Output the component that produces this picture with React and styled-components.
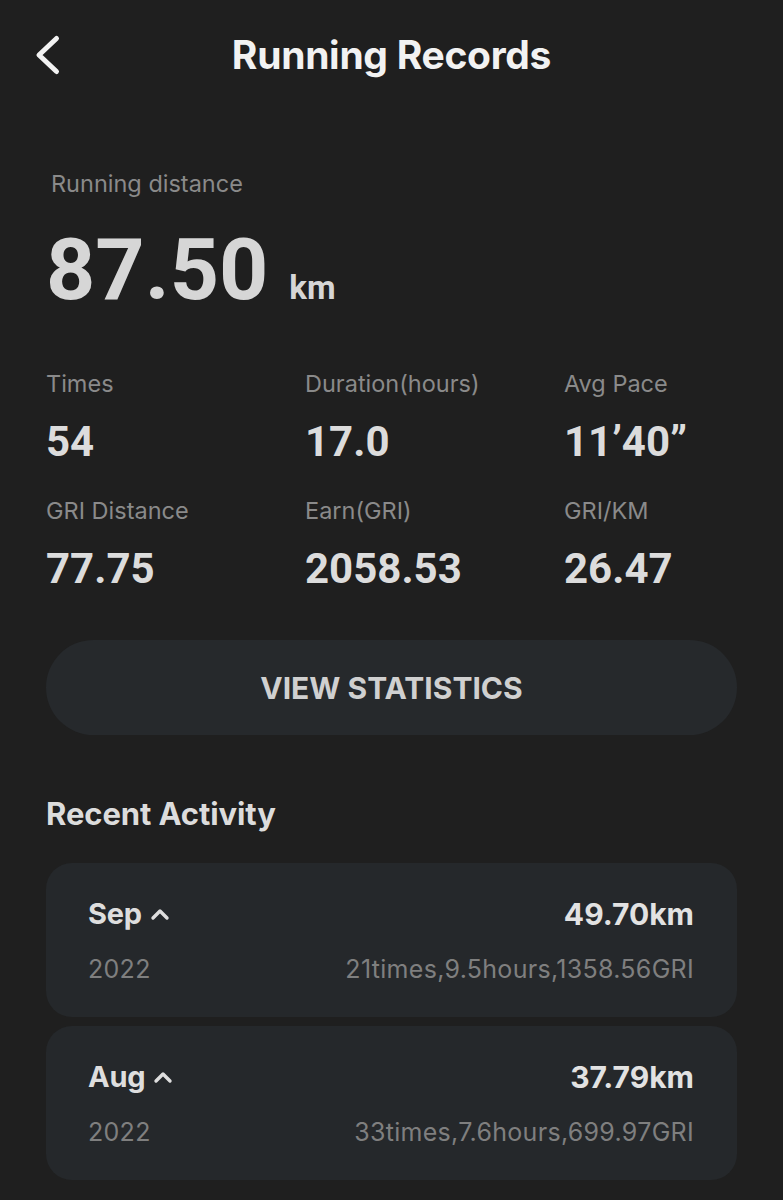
import React from 'react'
import styled, { createGlobalStyle } from 'styled-components'

const GlobalStyle = createGlobalStyle`
    body {
        margin: 0;
        background-color: #1f1f1f;
        font-family: Inter, Roboto, "Liberation Sans", sans-serif;
    }
`
const Page = styled.div`
    width: 783px;
    min-height: 1200px;
    background-color: #1f1f1f;
    color: #d6d6d6;
    padding: 0 46px;
    box-sizing: border-box;
`
const Header = styled.div`
    height: 108px;
    display: flex;
    align-items: center;
    justify-content: center;
    position: relative;
`
const Back = styled.button`
    position: absolute;
    left: -13px;
    top: 33px;
    background: none;
    border: none;
    padding: 0;
    width: 28px;
    height: 44px;
    display: block;
`
const Title = styled.h1`
    margin: 0;
    font-size: 39px;
    line-height: 1;
    font-weight: 700;
    color: #f2f2f2;
    letter-spacing: -0.3px;
`
const Summary = styled.div`
    padding-top: 61px;
    padding-left: 5px;
`
const Label = styled.div`
    font-size: 23.5px;
    line-height: 30px;
    color: #8a8a8a;
`
const Big = styled.div`
    display: flex;
    align-items: baseline;
    margin-top: 28px;
    margin-left: -5px;
`
const BigNumber = styled.span`
    font-family: Roboto, "Liberation Sans", sans-serif;
    font-size: 86px;
    font-weight: 700;
    line-height: 86px;
    color: #d6d6d6;
`
const Unit = styled.span`
    font-family: Roboto, "Liberation Sans", sans-serif;
    font-size: 33px;
    line-height: 34px;
    font-weight: 700;
    margin-left: 21px;
    color: #d6d6d6;
`
const Grid = styled.div`
    display: grid;
    grid-template-columns: 259px 259px 1fr;
    row-gap: 31px;
    margin-top: 56px;
`
const Stat = styled.div`
    display: flex;
    flex-direction: column;
    gap: 20px;
`
const StatValue = styled.div`
    font-family: Roboto, "Liberation Sans", sans-serif;
    font-size: 42px;
    font-weight: 700;
    line-height: 46px;
    color: #dcdcdc;
`
const StatButton = styled.button`
    margin-top: 48px;
    width: 100%;
    height: 95px;
    border: none;
    border-radius: 48px;
    background-color: #26292c;
    color: #d0d0d0;
    font-family: Inter, Roboto, "Liberation Sans", sans-serif;
    font-size: 30px;
    font-weight: 700;
    letter-spacing: 0;
    display: flex;
    align-items: center;
    justify-content: center;
`
const SectionTitle = styled.h2`
    margin: 63px 0 34px;
    font-size: 31px;
    line-height: 31px;
    font-weight: 700;
    letter-spacing: -0.1px;
    color: #dcdcdc;
`
const List = styled.div`
    display: flex;
    flex-direction: column;
    gap: 9px;
`
const Card = styled.div`
    border-radius: 26px;
    background-color: #25282b;
    padding: 36px 43px 35px 42px;
    display: flex;
    flex-direction: column;
    gap: 28px;
`
const CardRow = styled.div`
    display: flex;
    justify-content: space-between;
    align-items: center;
`
const Month = styled.div`
    display: flex;
    align-items: center;
    gap: 8px;
    font-size: 29px;
    line-height: 30px;
    font-weight: 700;
    letter-spacing: -0.2px;
    color: #dedede;
`
const Km = styled.div`
    font-size: 30px;
    line-height: 30px;
    font-weight: 700;
    letter-spacing: 0;
    color: #e2e2e2;
`
const Sub = styled.div`
    font-size: 25px;
    line-height: 25px;
    color: #7f7f7f;
    letter-spacing: 0.3px;
`

const stats = [
    { label: 'Times', value: '54' },
    { label: 'Duration(hours)', value: '17.0' },
    { label: 'Avg Pace', value: '11’40”' },
    { label: 'GRI Distance', value: '77.75' },
    { label: 'Earn(GRI)', value: '2058.53' },
    { label: 'GRI/KM', value: '26.47' },
]

const months = [
    { month: 'Sep', year: '2022', km: '49.70km', detail: '21times,9.5hours,1358.56GRI' },
    { month: 'Aug', year: '2022', km: '37.79km', detail: '33times,7.6hours,699.97GRI' },
]

const Caret = () => (
    <svg width="20" height="14" viewBox="0 0 20 14">
        <path d="M3 11 L10 4 L17 11" fill="none" stroke="#dedede" strokeWidth="3.4" strokeLinecap="round" strokeLinejoin="round" />
    </svg>
)

const App = () => {
    return (
        <Page>
            <GlobalStyle />
            <Header>
                <Back>
                    <svg width="28" height="44" viewBox="0 0 28 44">
                        <path d="M23.5 5.5 L6 22 L23.5 38.5" fill="none" stroke="#f2f2f2" strokeWidth="5" strokeLinecap="round" strokeLinejoin="round" />
                    </svg>
                </Back>
                <Title>Running Records</Title>
            </Header>
            <Summary>
                <Label>Running distance</Label>
                <Big>
                    <BigNumber>87.50</BigNumber>
                    <Unit>km</Unit>
                </Big>
            </Summary>
            <Grid>
                {stats.map((s) => (
                    <Stat key={s.label}>
                        <Label>{s.label}</Label>
                        <StatValue>{s.value}</StatValue>
                    </Stat>
                ))}
            </Grid>
            <StatButton>VIEW STATISTICS</StatButton>
            <SectionTitle>Recent Activity</SectionTitle>
            <List>
                {months.map((m) => (
                    <Card key={m.month}>
                        <CardRow>
                            <Month>{m.month}<Caret /></Month>
                            <Km>{m.km}</Km>
                        </CardRow>
                        <CardRow>
                            <Sub>{m.year}</Sub>
                            <Sub>{m.detail}</Sub>
                        </CardRow>
                    </Card>
                ))}
            </List>
        </Page>
    )
}

export default App
